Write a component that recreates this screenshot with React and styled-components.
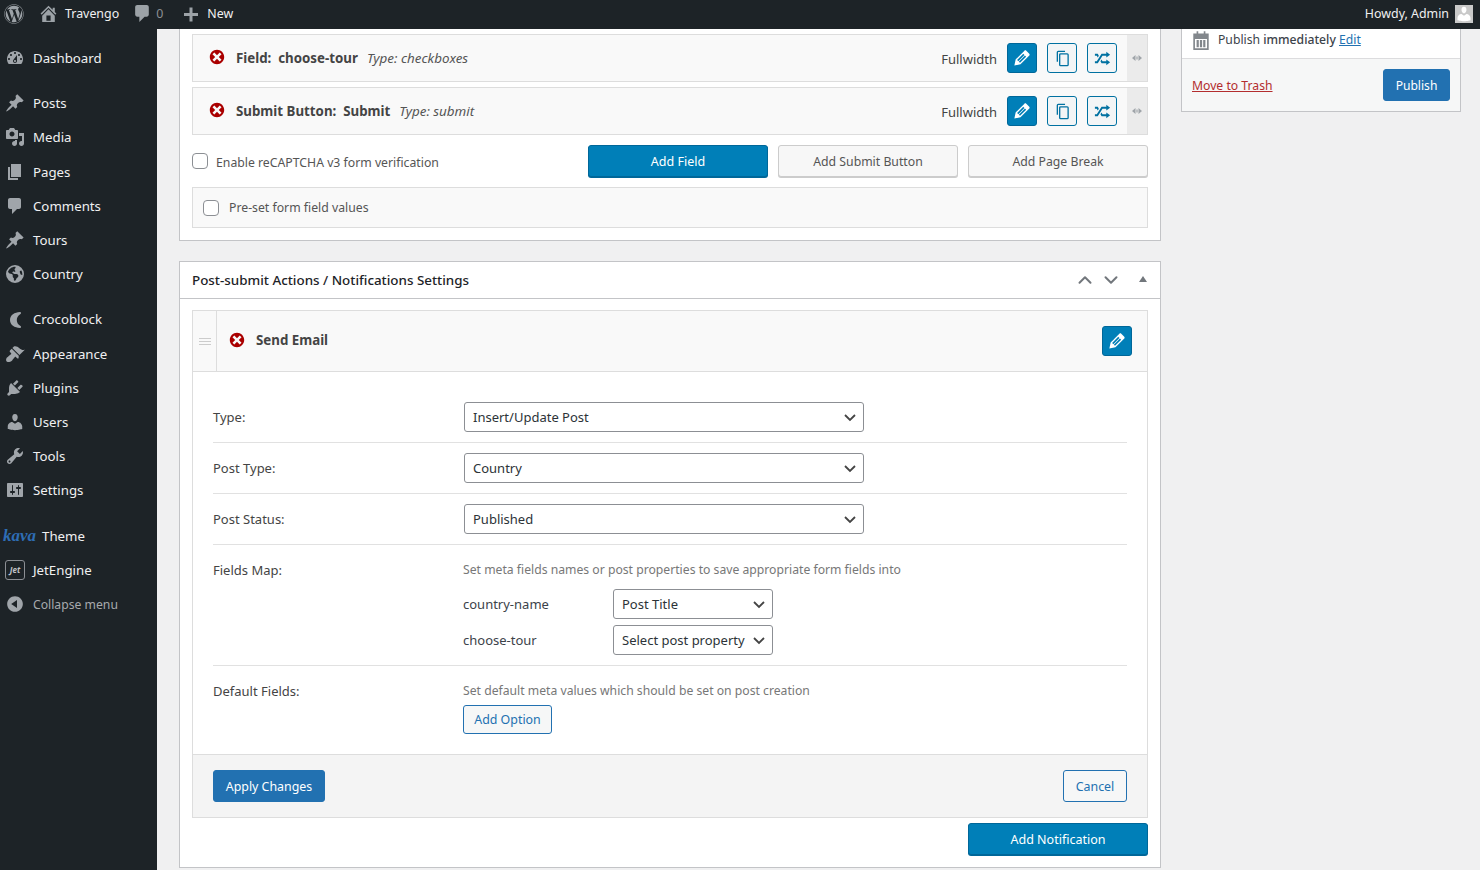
import React from "react";
import styled, { createGlobalStyle } from "styled-components";
import { FaWordpress, FaEarthAmericas } from "react-icons/fa6";
import { ChevronUp, ChevronDown } from "lucide-react";

const FONT = '"Noto Sans", "Open Sans", "Liberation Sans", sans-serif';

const Global = createGlobalStyle`
  html, body { margin: 0; padding: 0; height: 870px; overflow: hidden; background: #f0f0f1; }
  body { font-family: ${FONT}; font-size: 13px; color: #3c434a; }
  * { box-sizing: border-box; }
`;

const P = {
  dismiss: "M10 2c4.42 0 8 3.58 8 8s-3.58 8-8 8-8-3.58-8-8 3.58-8 8-8zm5 11l-3-3 3-3-2-2-3 3-3-3-2 2 3 3-3 3 2 2 3-3 3 3z",
  edit: "M13.89 3.39l2.71 2.72c.46.46.42 1.24.03 1.64l-8.01 8.02-5.56 1.16 1.16-5.58s7.6-7.63 7.99-8.03c.39-.39 1.22-.39 1.68.07zm-2.73 2.79l-5.59 5.61 1.11 1.11 5.54-5.65zm-2.97 8.23l5.58-5.6-1.07-1.08-5.59 5.6z",
  random: "M18 6.01L14 9V7h-4l-5 8H2v-2h2l5-8h5V3zM2 5h3l1.15 2.17-1.12 1.8L4 7H2V5zm16 9.01L14 17v-2H9l-1.15-2.17 1.12-1.8L10 13h4v-2z",
  pin: "M10.44 3.02l1.82-1.82 6.36 6.35-1.83 1.82c-1.05-.68-2.48-.57-3.41.36l-.75.75c-.92.93-1.04 2.35-.35 3.41l-1.83 1.82-2.41-2.41-2.8 2.79c-.42.42-3.38 2.71-3.8 2.29s1.86-3.39 2.28-3.81l2.79-2.79L4.1 9.36l1.83-1.82c1.05.69 2.48.57 3.41-.36l.75-.75c.93-.92 1.04-2.35.35-3.41z",
  dashboard: "M3.76 16h12.48c1.1-1.37 1.76-3.11 1.76-5 0-4.42-3.58-8-8-8s-8 3.58-8 8c0 1.89.66 3.63 1.76 5zM10 4c.55 0 1 .45 1 1s-.45 1-1 1-1-.45-1-1 .45-1 1-1zM6 6c.55 0 1 .45 1 1s-.45 1-1 1-1-.45-1-1 .45-1 1-1zm8 0c.55 0 1 .45 1 1s-.45 1-1 1-1-.45-1-1 .45-1 1-1zm-5.37 5.55L12 7v6c0 1.1-.9 2-2 2s-2-.9-2-2c0-.57.24-1.08.63-1.45zM4 10c.55 0 1 .45 1 1s-.45 1-1 1-1-.45-1-1 .45-1 1-1zm12 0c.55 0 1 .45 1 1s-.45 1-1 1-1-.45-1-1 .45-1 1-1zm-5 3c0-.55-.45-1-1-1s-1 .45-1 1 .45 1 1 1 1-.45 1-1z",
  media: "M13 11V4c0-.55-.45-1-1-1h-1.67L9 1H5L3.67 3H2c-.55 0-1 .45-1 1v7c0 .55.45 1 1 1h10c.55 0 1-.45 1-1zM7 4.5c1.38 0 2.5 1.12 2.5 2.5S8.38 9.5 7 9.5 4.5 8.38 4.5 7 5.62 4.5 7 4.5zM14 6h5v10.5c0 1.38-1.12 2.5-2.5 2.5S14 17.88 14 16.5s1.12-2.5 2.5-2.5c.17 0 .34.02.5.05V9h-3V6zm-4 8.05V13h2v3.5c0 1.38-1.12 2.5-2.5 2.5S7 17.88 7 16.5 8.12 14 9.5 14c.17 0 .34.02.5.05z",
  page: "M6 15V2h10v13H6zm-1 1h8v2H3V5h2v11z",
  comment: "M5 2h9c1.1 0 2 .9 2 2v7c0 1.1-.9 2-2 2h-2l-5 5v-5H5c-1.1 0-2-.9-2-2V4c0-1.1.9-2 2-2z",
  brush: "M14.48 11.06L7.41 3.99l1.5-1.5c.5-.56 2.3-.47 3.51.32 1.21.8 1.43 1.28 2.91 2.1 1.18.64 2.45 1.26 4.45.85zm-.71.71L6.7 4.7 4.93 6.47c-.39.39-.39 1.02 0 1.41l1.06 1.06c.39.39.39 1.03 0 1.42-.6.6-1.43 1.11-2.21 1.69-.35.26-.7.53-1.01.84C1.43 13.23.91 15.2 1.15 16.41c.15.76.78 1.41 1.48 1.59 1.21.24 3.18-.28 4.52-1.62.31-.31.58-.66.84-1.01.58-.78 1.09-1.61 1.69-2.21.39-.39 1.03-.39 1.42 0l1.06 1.06c.39.39 1.02.39 1.41 0z",
  plugin: "M13.11 4.36L9.87 7.6 8 5.73l3.24-3.24c.35-.34 1.05-.2 1.56.32.52.51.66 1.21.31 1.55zm-8 1.77l.91-1.12 9.01 9.01-1.19.84c-.71.71-2.63 1.16-3.82 1.16H6.14L4.9 17.26c-.59.59-1.54.59-2.12 0-.59-.58-.59-1.53 0-2.12l1.24-1.24v-3.88c0-1.13.4-3.19 1.09-3.89zm7.26 3.97l3.24-3.24c.34-.35 1.04-.21 1.55.31.52.51.66 1.21.31 1.55l-3.24 3.25z",
  user: "M10 9.25c-2.27 0-2.73-3.44-2.73-3.44C7 4.02 7.82 2 9.97 2c2.16 0 2.98 2.02 2.71 3.81 0 0-.41 3.44-2.68 3.44zm0 2.57L12.72 10c2.39 0 4.52 2.33 4.52 4.53v2.49s-3.65 1.13-7.24 1.13c-3.65 0-7.24-1.13-7.24-1.13v-2.49c0-2.25 1.94-4.48 4.47-4.48z",
  tools: "M16.68 9.77c-1.34 1.34-3.3 1.67-4.95.99l-5.41 6.52c-.99.99-2.59.99-3.58 0s-.99-2.59 0-3.57l6.52-5.42c-.68-1.65-.35-3.61.99-4.95 1.28-1.28 3.12-1.62 4.72-1.06l-2.89 2.89 2.82 2.82 2.86-2.87c.53 1.58.18 3.39-1.08 4.65zM3.81 16.21c.4.39 1.04.39 1.43 0 .4-.4.4-1.04 0-1.43-.39-.4-1.03-.4-1.43 0-.39.39-.39 1.03 0 1.43z",
  settings: "M18 16V4c0-.55-.45-1-1-1H3c-.55 0-1 .45-1 1v12c0 .55.45 1 1 1h14c.55 0 1-.45 1-1zM8 11h1c.55 0 1 .45 1 1s-.45 1-1 1H8v1.5c0 .28-.22.5-.5.5s-.5-.22-.5-.5V13H6c-.55 0-1-.45-1-1s.45-1 1-1h1V5.5c0-.28.22-.5.5-.5s.5.22.5.5V11zm5-2h-1c-.55 0-1-.45-1-1s.45-1 1-1h1V5.5c0-.28.22-.5.5-.5s.5.22.5.5V7h1c.55 0 1 .45 1 1s-.45 1-1 1h-1v5.5c0 .28-.22.5-.5.5s-.5-.22-.5-.5V9z",
  collapse: "M10 2.16c4.33 0 7.84 3.51 7.84 7.84s-3.51 7.84-7.84 7.84S2.16 14.33 2.16 10 5.71 2.16 10 2.16zm2 11.72V6.12L6.18 9.97z",
  home: "M16 8.5l1.53 1.53-1.06 1.06L10 4.62l-6.47 6.47-1.06-1.06L10 2.5l4 4v-2h2v4zm-6-2.46l6 5.99V18H4v-5.97zM12 17v-5H8v5h4z",
  plus: "M17 9v3h-5.5v5.5h-3V12H3V9h5.5V3.5h3V9z",
  croco: "M15 3C9.5 3.2 5 6 5 11s4.5 7.8 10 8c1.2-.1 1.4-1.3.5-2C13 15.5 11.8 13.5 11.8 11s1.2-4.5 3.7-6C16.4 4.3 16.2 3.1 15 3z",
  calendar: "M3 4h3V2h1.5v2h5V2H14v2h3v15H3zm1.5 5v8.5h11V9zM6 10h2v6.5H6zm3 0h2v6.5H9zm3 0h2v6.5h-2z",
};

const Dash = ({ d, size = 20, color = "currentColor" }) => (
  <svg width={size} height={size} viewBox="0 0 20 20" fill={color} aria-hidden="true"><path d={d} /></svg>
);

/* ---------- layout ---------- */
const Screen = styled.div`
  width: 1480px; height: 870px; display: flex; flex-direction: column; overflow: hidden; background: #f0f0f1;
`;
const TopBar = styled.header`
  height: 29px; flex: none; background: #1d2327; color: #f0f0f1; display: flex; align-items: center;
  justify-content: space-between; font-size: 12.4px; padding: 0 7px 0 0;
`;
const TopGroup = styled.div`display: flex; align-items: center; height: 100%;`;
const TopItem = styled.div`
  display: flex; align-items: center; gap: ${p => p.$gap ?? 7}px; margin-left: ${p => p.$left ?? 0}px;
  color: ${p => p.$muted ? "#8c8f94" : "#f0f0f1"}; white-space: nowrap; line-height: 26px; height: 29px; padding-bottom: 2px;
  svg { color: #9ca2a7; flex: none; }
`;
const Avatar = styled.div`
  width: 18px; height: 18px; background: #c9c9c9; margin-left: 6px; margin-top: -2px; display: flex; align-items: flex-end; justify-content: center;
  overflow: hidden; svg { color: #fff; }
`;
const Body = styled.div`flex: 1; display: flex; min-height: 0;`;
const Sidebar = styled.nav`
  width: 157px; flex: none; background: #1d2327; padding-top: 12px; color: #f0f0f1; font-size: 13.25px;
`;
const MenuGroup = styled.div`margin-bottom: 11px;`;
const MenuItem = styled.div`
  height: 34.2px; display: flex; align-items: center; white-space: nowrap;
  color: ${p => p.$muted ? "#a7aaad" : "#f0f0f1"}; font-size: ${p => p.$muted ? "12.2px" : "inherit"};
  padding-top: ${p => p.$muted ? "1px" : "0"};
`;
const MenuIcon = styled.span`
  width: 33px; flex: none; display: flex; justify-content: center; padding-right: 3px; color: #a0a5aa;
`;
const KavaMark = styled.span`
  font-family: "Liberation Serif", serif; font-style: italic; font-weight: 700; font-size: 17px; color: #2e6db4;
  margin: 0 6px 0 3px; line-height: 1;
`;
const JetMark = styled.span`
  width: 20px; height: 20px; margin: 0 8px 0 5px; border: 1px solid #8c8f94; border-radius: 3px; color: #c3c4c7;
  font-size: 8px; font-weight: 700; font-style: italic; display: flex; align-items: center; justify-content: center;
`;
const Main = styled.main`flex: 1; display: flex; align-items: flex-start; gap: 20px; padding-left: 22px; min-width: 0;`;
const Column = styled.div`width: 982px; flex: none; display: flex; flex-direction: column; gap: 20px;`;
const Panel = styled.section`
  background: #fff; border: 1px solid #c3c4c7; ${p => p.$cut && "border-top: none;"}
`;
const PanelInner = styled.div`padding: ${p => p.$cut ? "5px 12px 12px" : "11px 12px 12px"};`;
const FieldRow = styled.div`
  height: 48px; display: flex; align-items: center; background: #f9f9f9; border: 1px solid #ddd; margin-bottom: 5px; padding-left: 15px;
  font-size: 13px;
`;
const ErrorIcon = styled.span`
  display: flex; color: #a00; flex: none; margin-right: ${p => p.$gap ?? 10}px; margin-top: -2px;
`;
const FieldName = styled.strong`font-weight: 700; color: #444; font-size: 13.3px; white-space: pre; margin-top: ${p => p.$up ? "-2px" : "0"};`;
const FieldType = styled.em`font-style: italic; color: #555; margin-left: 9px; font-size: 13.4px;`;
const Spacer = styled.div`flex: 1;`;
const WidthLabel = styled.span`color: #444; margin-right: 10px; margin-top: 1px; font-size: 13px;`;
const IconBtn = styled.button`
  width: 30px; height: 30px; padding: 0; margin-right: ${p => p.$end ? 0 : 10}px; border-radius: 3px; display: flex; align-items: center; justify-content: center;
  border: 1px solid ${p => p.$solid ? "#006799" : "#0071a1"};
  background: ${p => p.$solid ? "#007fb8" : "#f3f5f6"};
  color: ${p => p.$solid ? "#fff" : "#0071a1"};
`;
const DragCol = styled.div`
  width: 20px; align-self: stretch; background: #ebebeb; display: flex; align-items: center; justify-content: center; color: #a0a5aa;
`;
const ActionRow = styled.div`display: flex; align-items: center; margin: 10px 0 10px; gap: 10px;`;
const CheckLabel = styled.label`
  display: flex; align-items: center; gap: ${p => p.$gap ?? 8}px; color: #555; font-size: 12.25px; flex: 1;
  padding-top: ${p => p.$gap ? 0 : 2}px;
  input { margin-top: ${p => p.$gap ? 0 : -2}px; }
`;
const Check = styled.input.attrs({ type: "checkbox" })`
  appearance: none; width: 16px; height: 16px; margin: 0; background: #fff; border: 1px solid #8c8f94; border-radius: 4px; flex: none;
`;
const WideBtn = styled.button`
  width: 180px; height: 32px; padding: 0; border-radius: 3px; font: ${p => p.$primary ? "12.5px" : "12.25px"} ${FONT};
  background: ${p => p.$primary ? "#007fb8" : "#f7f7f7"}; color: ${p => p.$primary ? "#fff" : "#555"};
  border: 1px solid ${p => p.$primary ? "#006799" : "#ccc"};
  box-shadow: 0 1px 0 ${p => p.$primary ? "#006799" : "#ccc"};
`;
const PresetBox = styled.div`
  height: 41px; border: 1px solid #ddd; background: #f9f9f9; display: flex; align-items: center; padding-left: 10px;
`;
const PanelHead = styled.header`
  height: 37px; border-bottom: 1px solid #c3c4c7; display: flex; align-items: center; padding: 0 13px 0 12px; color: #1d2327; font-size: 13.4px; font-weight: 500;
`;
const HeadIcons = styled.div`display: flex; align-items: center; color: #72777c; gap: 4px;`;
const Triangle = styled.span`
  width: 0; height: 0; border: 4px solid transparent; border-bottom: 6px solid #72777c; border-top: none; margin: -3px 0 0 13px;
`;
const NotifyBox = styled.div`border: 1px solid #ddd;`;
const NotifyHead = styled.div`
  height: 61px; display: flex; align-items: center; background: #f9f9f9; border-bottom: 1px solid #ddd; padding-right: 15px;
`;
const Handle = styled.div`
  width: 24px; align-self: stretch; border-right: 1px solid #ddd; margin-right: 11px; display: flex; flex-direction: column; align-items: center; justify-content: center; gap: 2px;
  i { display: block; width: 12px; height: 1px; background: #ccc; }
`;
const NotifyBody = styled.div`padding: 20px 20px 20px; background: #fff;`;
const SettingRow = styled.div`
  display: grid; grid-template-columns: 250px 1fr; align-items: ${p => p.$top ? "start" : "center"};
  padding: ${p => p.$top ? "15px" : "10px"} 0 10px; border-bottom: ${p => p.$last ? "none" : "1px solid #e1e1e1"};
  padding-bottom: ${p => p.$last ? 0 : 10}px;
`;
const RowLabel = styled.div`color: #444; font-size: 13px; line-height: 20px;`;
const Select = styled.select`
  appearance: none; display: block; width: ${p => p.$w ?? 400}px; height: 30px; margin-left: ${p => p.$shift ?? 1}px; padding: 0 22px 0 8px;
  border: 1px solid #8c8f94; border-radius: 3px; color: #2c3338; font: 13px ${FONT}; 
  background: #fff url("data:image/svg+xml,%3Csvg xmlns='http://www.w3.org/2000/svg' width='16' height='16' viewBox='0 0 16 16'%3E%3Cpath d='M3 6l5 5 5-5' fill='none' stroke='%23444' stroke-width='1.8'/%3E%3C/svg%3E") no-repeat right 5px center;
`;
const Hint = styled.div`color: #777; font-size: 12.2px; line-height: 20px; margin-bottom: ${p => p.$mb ?? 9}px;`;
const MapRow = styled.div`
  display: grid; grid-template-columns: 150px 160px; align-items: center; margin-bottom: 6px; color: #3c434a; font-size: 13px;
  &:last-child { margin-bottom: 0; }
`;
const OutlineBtn = styled.button`
  height: ${p => p.$h ?? 29}px; padding: 0; width: ${p => p.$w}px; border: 1px solid #2271b1; border-radius: 3px; background: #f6f7f7; color: #2271b1; font: 12.4px ${FONT};
  line-height: ${p => (p.$h ?? 29) - 3}px;
`;
const NotifyFoot = styled.div`
  height: 63px; background: #f4f4f4; border-top: 1px solid #ddd; display: flex; align-items: center; justify-content: space-between; padding: 0 20px;
`;
const BlueBtn = styled.button`
  height: 32px; width: ${p => p.$w}px; padding: 0; border: 1px solid #2271b1; border-radius: 3px; background: #2271b1; color: #fff; font: ${p => p.$small ? "12.1px" : "12.4px"} ${FONT};
`;
const NotifyAction = styled.div`display: flex; justify-content: flex-end; margin-top: 5px;`;
const SideCard = styled.aside`
  width: 280px; flex: none; background: #fff; border: 1px solid #c3c4c7; border-top: none; font-size: 12.2px;
`;
const PublishLine = styled.div`
  height: 29px; display: flex; align-items: center; gap: 6px; padding: 0 0 8px 8px; color: #3c434a;
  svg { color: #82878c; flex: none; }
  b { font-weight: 500; }
`;
const Link = styled.a`color: ${p => p.$red ? "#b32d2e" : "#2271b1"}; text-decoration: underline; font-size: 12.2px;`;
const PublishFoot = styled.div`
  height: 53px; border-top: 1px solid #dcdcde; background: #f6f7f7; display: flex; align-items: center; justify-content: space-between; padding: 0 10px;
`;

const MENU = [
  [["dashboard", "Dashboard"]],
  [["pin", "Posts"], ["media", "Media"], ["page", "Pages"], ["comment", "Comments"], ["pin", "Tours"], ["globe", "Country"]],
  [["croco", "Crocoblock"], ["brush", "Appearance"], ["plugin", "Plugins"], ["user", "Users"], ["tools", "Tools"], ["settings", "Settings"]],
];

const CopyIcon = () => (
  <svg width="15" height="17" viewBox="0 0 16 18" fill="none" stroke="currentColor" strokeWidth="1.4" aria-hidden="true">
    <path d="M2.5 12.5V2.2a.9.9 0 0 1 .9-.9h7.3" />
    <rect x="5" y="4" width="9" height="12.6" rx="1" />
  </svg>
);
const Arrows = () => (
  <svg width="10" height="6" viewBox="0 0 10 6" fill="currentColor" aria-hidden="true">
    <path d="M3.5 0v6L0 3zM6.5 0v6L10 3z" /><rect x="4.4" y="1.5" width="1.2" height="3" />
  </svg>
);

const Field = ({ name, type }) => (
  <FieldRow>
    <ErrorIcon $gap={10}><Dash d={P.dismiss} size={18} /></ErrorIcon>
    <FieldName>{name}</FieldName>
    <FieldType>{type}</FieldType>
    <Spacer />
    <WidthLabel>Fullwidth</WidthLabel>
    <IconBtn $solid><Dash d={P.edit} size={22} /></IconBtn>
    <IconBtn><CopyIcon /></IconBtn>
    <IconBtn><Dash d={P.random} size={19} /></IconBtn>
    <DragCol><Arrows /></DragCol>
  </FieldRow>
);

export default function App() {
  return (
    <Screen>
      <Global />
      <TopBar>
        <TopGroup>
          <TopItem $left={4}><FaWordpress size={20} /></TopItem>
          <TopItem $left={14} $gap={6}><Dash d={P.home} size={21} />Travengo</TopItem>
          <TopItem $left={13} $gap={3} $muted><Dash d={P.comment} size={21} />0</TopItem>
          <TopItem $left={18} $gap={6}><Dash d={P.plus} size={20} />New</TopItem>
        </TopGroup>
        <TopGroup>
          <TopItem>Howdy, Admin</TopItem>
          <Avatar><Dash d={P.user} size={18} color="#fff" /></Avatar>
        </TopGroup>
      </TopBar>
      <Body>
        <Sidebar>
          {MENU.map((group, i) => (
            <MenuGroup key={i}>
              {group.map(([icon, label]) => (
                <MenuItem key={label}>
                  <MenuIcon>{icon === "globe" ? <FaEarthAmericas size={18} /> : <Dash d={P[icon]} />}</MenuIcon>
                  {label}
                </MenuItem>
              ))}
            </MenuGroup>
          ))}
          <MenuItem><KavaMark>kava</KavaMark>Theme</MenuItem>
          <MenuItem><JetMark>Jet</JetMark>JetEngine</MenuItem>
          <MenuItem $muted><MenuIcon><Dash d={P.collapse} /></MenuIcon>Collapse menu</MenuItem>
        </Sidebar>
        <Main>
          <Column>
            <Panel $cut>
              <PanelInner $cut>
                <Field name="Field:  choose-tour" type="Type: checkboxes" />
                <Field name="Submit Button:  Submit" type="Type: submit" />
                <ActionRow>
                  <CheckLabel><Check />Enable reCAPTCHA v3 form verification</CheckLabel>
                  <WideBtn $primary>Add Field</WideBtn>
                  <WideBtn>Add Submit Button</WideBtn>
                  <WideBtn>Add Page Break</WideBtn>
                </ActionRow>
                <PresetBox>
                  <CheckLabel $gap={10}><Check />Pre-set form field values</CheckLabel>
                </PresetBox>
              </PanelInner>
            </Panel>
            <Panel>
              <PanelHead>
                Post-submit Actions / Notifications Settings
                <Spacer />
                <HeadIcons>
                  <ChevronUp size={22} strokeWidth={2.2} />
                  <ChevronDown size={22} strokeWidth={2.2} />
                  <Triangle />
                </HeadIcons>
              </PanelHead>
              <PanelInner>
                <NotifyBox>
                  <NotifyHead>
                    <Handle><i /><i /><i /></Handle>
                    <ErrorIcon $gap={10}><Dash d={P.dismiss} size={18} /></ErrorIcon>
                    <FieldName $up>Send Email</FieldName>
                    <Spacer />
                    <IconBtn $solid $end><Dash d={P.edit} size={22} /></IconBtn>
                  </NotifyHead>
                  <NotifyBody>
                    <SettingRow>
                      <RowLabel>Type:</RowLabel>
                      <Select defaultValue="a"><option value="a">Insert/Update Post</option></Select>
                    </SettingRow>
                    <SettingRow>
                      <RowLabel>Post Type:</RowLabel>
                      <Select defaultValue="a"><option value="a">Country</option></Select>
                    </SettingRow>
                    <SettingRow>
                      <RowLabel>Post Status:</RowLabel>
                      <Select defaultValue="a"><option value="a">Published</option></Select>
                    </SettingRow>
                    <SettingRow $top>
                      <RowLabel>Fields Map:</RowLabel>
                      <div>
                        <Hint>Set meta fields names or post properties to save appropriate form fields into</Hint>
                        <MapRow>country-name<Select $w={160} $shift={0}><option>Post Title</option></Select></MapRow>
                        <MapRow>choose-tour<Select $w={160} $shift={0}><option>Select post property</option></Select></MapRow>
                      </div>
                    </SettingRow>
                    <SettingRow $top $last>
                      <RowLabel>Default Fields:</RowLabel>
                      <div>
                        <Hint $mb={4}>Set default meta values which should be set on post creation</Hint>
                        <OutlineBtn $w={89}>Add Option</OutlineBtn>
                      </div>
                    </SettingRow>
                  </NotifyBody>
                  <NotifyFoot>
                    <BlueBtn $w={112}>Apply Changes</BlueBtn>
                    <OutlineBtn $w={64} $h={32}>Cancel</OutlineBtn>
                  </NotifyFoot>
                </NotifyBox>
                <NotifyAction><WideBtn $primary>Add Notification</WideBtn></NotifyAction>
              </PanelInner>
            </Panel>
          </Column>
          <SideCard>
            <PublishLine>
              <Dash d={P.calendar} size={22} />
              <span>Publish <b>immediately</b> <Link>Edit</Link></span>
            </PublishLine>
            <PublishFoot>
              <Link $red>Move to Trash</Link>
              <BlueBtn $w={67} $small>Publish</BlueBtn>
            </PublishFoot>
          </SideCard>
        </Main>
      </Body>
    </Screen>
  );
}
